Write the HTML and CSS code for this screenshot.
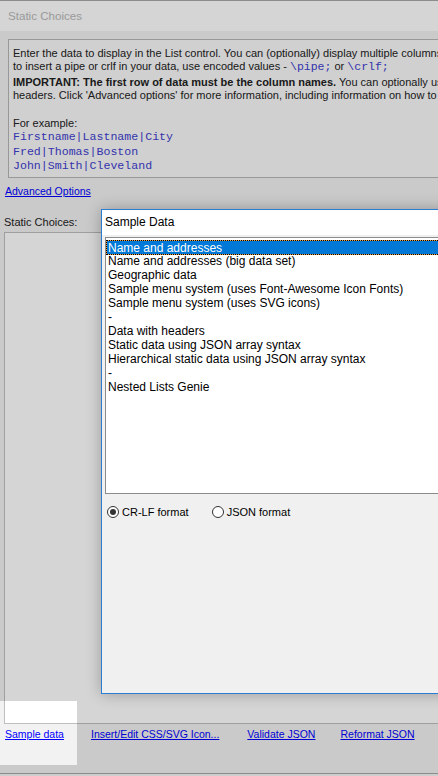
FILE: index.html
```html
<!DOCTYPE html>
<html>
<head>
<meta charset="utf-8">
<link rel="stylesheet" href="styles.css">
</head>
<body>
<div class="window">
  <div class="titlebar">Static Choices</div>
  <div class="info">
    <p class="line">Enter the data to display in the List control. You can (optionally) display multiple columns of data. Columns are separated with the pipe character. If you want</p>
    <p class="line">to insert a pipe or crlf in your data, use encoded values - <span class="code">\pipe;</span> or <span class="code">\crlf;</span></p>
    <p class="line bold-line"><b>IMPORTANT: The first row of data must be the column names.</b> You can optionally use the column names as List control</p>
    <p class="line">headers. Click 'Advanced options' for more information, including information on how to use JSON syntax.</p>
    <p class="line example">For example:</p>
    <p class="mono">Firstname|Lastname|City</p>
    <p class="mono">Fred|Thomas|Boston</p>
    <p class="mono">John|Smith|Cleveland</p>
  </div>
  <a class="link adv" href="#">Advanced Options</a>
  <div class="label">Static Choices:</div>
  <div class="textarea"></div>
  <div class="links">
    <a class="link" href="#">Sample data</a>
    <a class="link" href="#">Insert/Edit CSS/SVG Icon...</a>
    <a class="link" href="#">Validate JSON</a>
    <a class="link" href="#">Reformat JSON</a>
  </div>
  <div class="footer"></div>

  <div class="spotlight"></div>

  <div class="dialog">
    <div class="dlg-title">Sample Data</div>
    <div class="dlg-body">
      <div class="listbox">
        <div class="item selected">Name and addresses</div>
        <div class="item">Name and addresses (big data set)</div>
        <div class="item">Geographic data</div>
        <div class="item">Sample menu system (uses Font-Awesome Icon Fonts)</div>
        <div class="item">Sample menu system (uses SVG icons)</div>
        <div class="item">-</div>
        <div class="item">Data with headers</div>
        <div class="item">Static data using JSON array syntax</div>
        <div class="item">Hierarchical static data using JSON array syntax</div>
        <div class="item">-</div>
        <div class="item">Nested Lists Genie</div>
      </div>
      <div class="radios">
        <label class="radio"><span class="circle checked"></span>CR-LF format</label>
        <label class="radio"><span class="circle"></span>JSON format</label>
      </div>
    </div>
  </div>
</div>
</body>
</html>
```

FILE: styles.css
```css
* { box-sizing: border-box; }
html, body { margin: 0; padding: 0; }
body {
  width: 438px;
  height: 776px;
  overflow: hidden;
  font-family: "Liberation Sans", Arial, sans-serif;
  font-size: 11px;
  color: #222;
}
.window {
  position: relative;
  width: 438px;
  height: 776px;
  overflow: hidden;
  background: #f2f2f2;
  display: flex;
  flex-direction: column;
  align-items: flex-start;
}
.titlebar {
  width: 100%;
  height: 31px;
  border-top: 1px solid #a8a8a8;
  background: #ffffff;
  color: #b8b8b8;
  font-size: 11.6px;
  line-height: 30px;
  padding-left: 8px;
  flex: none;
}
.info {
  margin: 8px 0 0 8px;
  width: 700px;
  height: 139px;
  flex: none;
  border: 1px solid #b6b6b6;
  background: #f9f9f9;
  padding: 7px 4px 0 4px;
  white-space: nowrap;
}
.line { margin: 0; line-height: 13px; }
.bold-line { margin-top: 3px; }
.example { margin-top: 15px; }
.code { font-family: "Liberation Mono", "Courier New", monospace; font-size: 11.5px; color: #4040d0; }
.mono {
  margin: 0;
  font-family: "Liberation Mono", "Courier New", monospace;
  font-size: 11.6px;
  line-height: 14.5px;
  color: #4040d0;
}
.link {
  color: #0000ff;
  text-decoration: underline;
  font-size: 10.5px;
}
.adv { margin: 6px 0 0 5px; line-height: 14px; }
.label { margin: 17px 0 0 4px; line-height: 14px; }
.textarea {
  margin: 3px 0 0 4px;
  width: 700px;
  height: 492px;
  flex: none;
  border: 1px solid #bfbfbf;
  background: #ffffff;
}
.links {
  display: flex;
  margin: 3px 0 0 5px;
  line-height: 14px;
  white-space: nowrap;
}
.links .link:nth-child(1) { margin-right: 27px; }
.links .link:nth-child(2) { margin-right: 28px; }
.links .link:nth-child(3) { margin-right: 25px; }
.footer {
  margin-top: auto;
  width: 100%;
  height: 3px;
  border-top: 1px solid #a8a8a8;
  background: #f6f6f6;
  flex: none;
}
.spotlight {
  position: absolute;
  left: 0;
  top: 701px;
  width: 77px;
  height: 64px;
  box-shadow: 0 0 0 2000px rgba(0, 0, 0, 0.165);
  pointer-events: none;
}
.dialog {
  position: absolute;
  left: 101px;
  top: 209px;
  width: 420px;
  height: 485px;
  border: 1px solid #2b7cd3;
  background: #f0f0f0;
  box-shadow: 0 0 14px rgba(0, 0, 0, 0.28);
  display: flex;
  flex-direction: column;
  font-size: 12px;
}
.dlg-title {
  height: 25px;
  background: #ffffff;
  line-height: 25px;
  padding-left: 3px;
  color: #000;
  flex: none;
}
.dlg-body {
  padding: 2px 0 0 3px;
  display: flex;
  flex-direction: column;
}
.listbox {
  height: 257px;
  border: 1px solid #8c8c8c;
  border-right: none;
  background: #ffffff;
  padding-top: 2px;
  color: #000;
}
.item {
  height: 14px;
  line-height: 15px;
  padding-left: 2px;
  white-space: nowrap;
}
.item.selected {
  height: 15px;
  background: #0078d7;
  color: #fff;
  border: 1px solid #f0a040;
  outline: 1px dotted #000;
  outline-offset: -1px;
  padding-left: 1px;
  line-height: 14px;
  margin-bottom: -1px;
}
.radios {
  display: flex;
  gap: 23px;
  margin-top: 11px;
  padding-left: 2px;
  line-height: 14px;
  color: #000;
  font-size: 11px;
}
.radio { display: flex; align-items: center; gap: 3px; }
.circle {
  width: 12px;
  height: 12px;
  border: 1px solid #333;
  border-radius: 50%;
  background: #fff;
  display: inline-flex;
  align-items: center;
  justify-content: center;
}
.circle.checked::after {
  content: "";
  width: 6px;
  height: 6px;
  border-radius: 50%;
  background: #333;
}
```
